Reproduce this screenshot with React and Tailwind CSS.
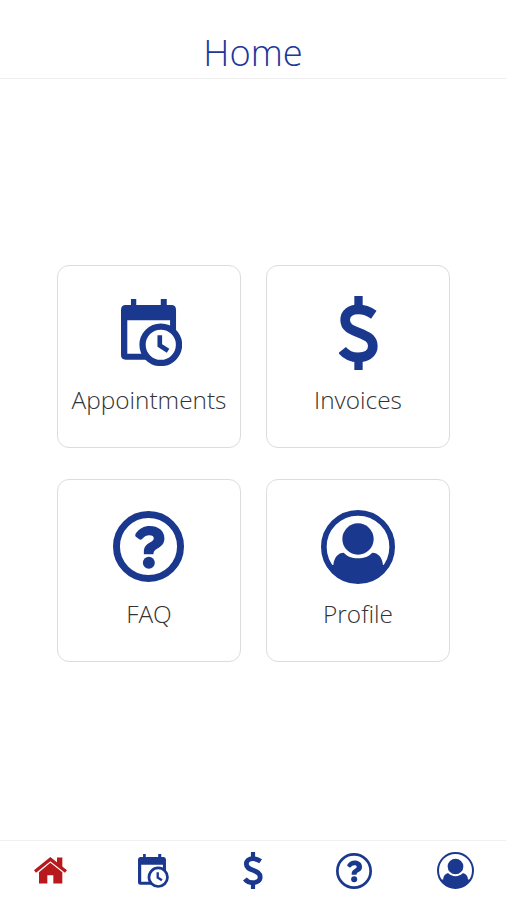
import React from "react";

const CalendarIcon = ({ className, small }) => (
  <svg viewBox="212 132 184 202" className={className} fill="currentColor">
    <rect x="242" y="132" width="16" height="26" />
    <rect x="332" y="132" width="18" height="26" />
    <path
      fillRule="evenodd"
      d="M226 150H364Q378 150 378 165V301Q378 315 364 315H226Q212 315 212 301V165Q212 150 226 150ZM231 196V297H360V196Z"
    />
    <circle cx="332" cy="270" r="55" fill="white" stroke="currentColor" strokeWidth={small ? 16 : 19} />
    <path d="M329 241V272L354 288" fill="none" stroke="currentColor" strokeWidth="14" />
  </svg>
);

const DollarIcon = ({ className }) => (
  <svg viewBox="237 122 116 222" className={className} fill="none" stroke="currentColor">
    <path d="M295 122V158M295 310V344" strokeWidth="25" />
    <path
      d="M341 178C325 167 311 162 295 162C270 162 255 174 255 194C255 216 272 223 296 232C321 242 338 250 338 272C338 293 320 306 294 306C273 306 258 299 246 284"
      strokeWidth="29"
    />
  </svg>
);

const QuestionIcon = ({ className, small }) => (
  <svg viewBox="188 123 214 214" className={className} fill="currentColor">
    <circle
      cx="295"
      cy="230"
      r={small ? 99 : 96.5}
      fill="none"
      stroke="currentColor"
      strokeWidth={small ? 16 : 21}
    />
    <path d="M257 190C267 176 281 168 299 168C324 168 343 182 343 206C343 222 333 230 322 236C313 241 310 245 310 253H281V246C281 232 288 225 298 219C306 214 311 211 311 205C311 199 306 196 298 196C288 196 281 201 275 208Q271 211 267 208L256 200Q253 196 257 190Z" />
    <circle cx="296" cy="279" r="18" />
  </svg>
);

const ProfileIcon = ({ className, small }) => (
  <svg viewBox="183 120 222 222" className={className} fill="currentColor">
    <circle
      cx="294"
      cy="231"
      r={small ? 105 : 102.5}
      fill="none"
      stroke="currentColor"
      strokeWidth={small ? 12 : 17}
    />
    <circle cx="294" cy="207" r="47" />
    <path d="M203 285L220 285C222 262 235 248 251 248C262 259 275 265 294 265C313 265 326 259 337 248C354 248 367 262 369 285L385 285A105 105 0 0 1 203 285Z" />
  </svg>
);

const HomeIcon = ({ className }) => (
  <svg viewBox="102 82 99 80" className={className} fill="currentColor">
    <path d="M105 125L151 88L198 125" fill="none" stroke="currentColor" strokeWidth="10" />
    <path d="M171 83H187V117L171 103Z" />
    <path d="M117 127L151 99L187 127V161H160V136H142V161H117Z" />
  </svg>
);

const tiles = [
  { label: "Appointments", icon: <CalendarIcon className="-mt-0.5 ml-1 h-[67px] w-[61px]" /> },
  { label: "Invoices", icon: <DollarIcon className="h-[74px] w-[39px]" /> },
  { label: "FAQ", icon: <QuestionIcon className="-mt-0.5 mr-0.5 size-[71px]" /> },
  { label: "Profile", icon: <ProfileIcon className="size-[74px]" /> },
];

const tabs = [
  { name: "Home", icon: <HomeIcon className="h-[27px] w-[33px] text-[#b7191c]" /> },
  { name: "Appointments", icon: <CalendarIcon small className="ml-[3px] h-[34px] w-[31px]" /> },
  { name: "Invoices", icon: <DollarIcon className="h-[37px] w-5" /> },
  { name: "FAQ", icon: <QuestionIcon small className="size-9" /> },
  { name: "Profile", icon: <ProfileIcon small className="size-[37px]" /> },
];

const Tile = ({ label, icon }) => (
  <button className="flex h-[183px] flex-col items-center rounded-xl border-[1.5px] border-[#dcdcdc] pt-[30px]">
    <span className="flex h-[74px] items-center justify-center text-[#1b388f]">{icon}</span>
    <span className="mt-3 text-[24.4px] leading-9 font-light whitespace-nowrap text-[#333]">{label}</span>
  </button>
);

export default function App() {
  return (
    <div className="flex h-[900px] w-[506px] flex-col bg-white font-['Open_Sans',sans-serif]">
      <header className="flex h-[79px] items-end justify-center border-b border-[#eee]">
        <h1 className="text-[36.3px] leading-[52px] font-light text-[#20369a]">Home</h1>
      </header>

      <main className="flex-1 px-[57px] pt-[186px]">
        <div className="grid grid-cols-[184px_184px] gap-x-[25px] gap-y-[31px]">
          {tiles.map((tile) => (
            <Tile key={tile.label} {...tile} />
          ))}
        </div>
      </main>

      <nav className="grid h-[60px] grid-cols-5 border-t border-[#f0f0f0] text-[#1b388f]">
        {tabs.map((tab) => (
          <button key={tab.name} aria-label={tab.name} className="flex items-center justify-center">
            {tab.icon}
          </button>
        ))}
      </nav>
    </div>
  );
}
